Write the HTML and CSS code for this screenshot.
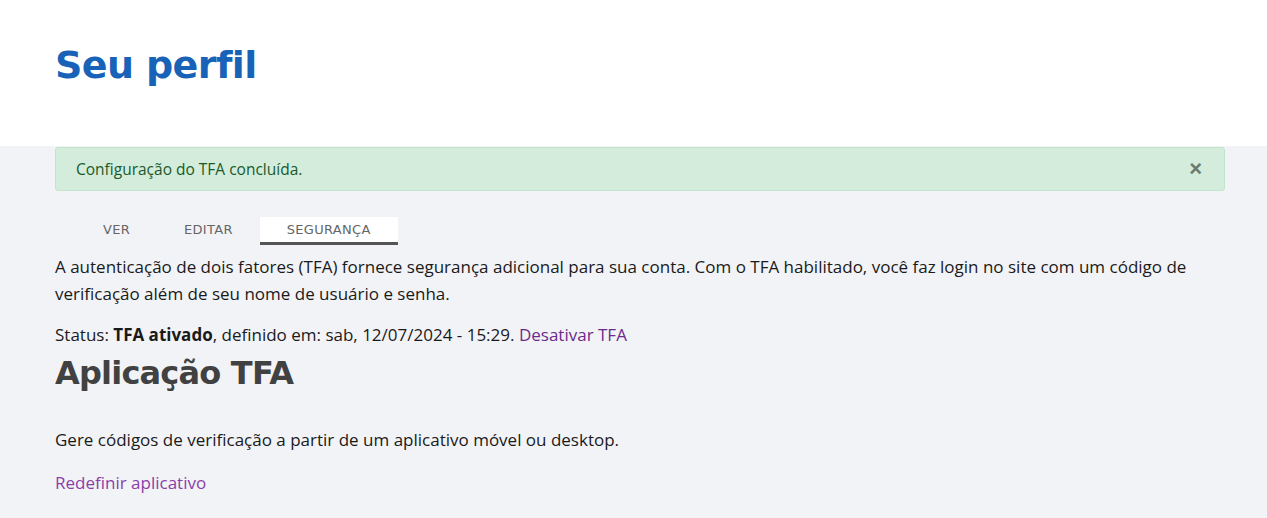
FILE: index.html
```html
<!DOCTYPE html>
<html lang="pt-BR">
<head>
    <meta charset="UTF-8" />
    <meta name="viewport" content="width=device-width, initial-scale=1.0" />
    <title>Seu perfil</title>
    <link rel="stylesheet" href="styles.css">
</head>
<body>
    <header class="page-header">
        <h1>Seu perfil</h1>
    </header>

    <main class="content">
        <div class="alert">
            <span>Configuração do TFA concluída.</span>
            <button class="alert-close" aria-label="Fechar">&times;</button>
        </div>

        <nav class="tabs">
            <a href="#" class="tab">Ver</a>
            <a href="#" class="tab">Editar</a>
            <a href="#" class="tab active">Segurança</a>
        </nav>

        <p class="intro">A autenticação de dois fatores (TFA) fornece segurança adicional para sua conta. Com o TFA habilitado, você faz login no site com um código de verificação além de seu nome de usuário e senha.</p>
        <p class="status">Status: <strong>TFA ativado</strong>, definido em: sab, 12/07/2024 - 15:29. <a href="#" class="link-dark">Desativar TFA</a></p>

        <h2>Aplicação TFA</h2>
        <p class="desc">Gere códigos de verificação a partir de um aplicativo móvel ou desktop.</p>
        <p><a href="#" class="link">Redefinir aplicativo</a></p>
    </main>
</body>
</html>
```

FILE: styles.css
```css
html, body { margin: 0; }
body { font-family: "Open Sans", "Noto Sans", sans-serif; font-size: 17px; color: #1a1a1a; background-color: #f2f3f7; min-height: 518px; }
.page-header { background: #fff; height: 146px; padding: 0 55px; box-sizing: border-box; }
.page-header h1 { margin: 0; padding-top: 43px; font-family: "DejaVu Sans", sans-serif; font-weight: bold; font-size: 38px; color: #1863b8; letter-spacing: -0.6px; }
.content { padding: 1px 42px 20px 55px; }
.alert { display: flex; justify-content: space-between; align-items: center; height: 44px; box-sizing: border-box; padding: 0 20px; background: #d4ecdb; border: 1px solid #c3e3cb; border-radius: 3px; color: #195a2a; font-size: 15.5px; }
.alert-close { background: none; border: 0; font-size: 22px; font-weight: bold; color: #6b7a6e; cursor: pointer; padding: 0 2px; line-height: 1; }
.tabs { display: flex; margin: 26px 0 0 21px; }
.tab { display: block; padding: 6px 27px 5px; font-family: "DejaVu Sans", sans-serif; font-size: 13px; line-height: 14px; letter-spacing: 0.3px; text-transform: uppercase; color: #666; text-decoration: none; border-bottom: 3px solid transparent; }
.tab.active { background: #fff; border-bottom-color: #555; }
.intro { margin: 8px 0 0; line-height: 27px; }
.status { margin: 14px 0 0; line-height: 27px; }
h2 { margin: 3px 0 0; font-family: "DejaVu Sans", sans-serif; font-size: 32px; font-weight: bold; color: #414141; line-height: 44px; letter-spacing: -0.8px; }
.desc { margin: 33px 0 0; }
.link, .link-dark { text-decoration: none; }
.link { color: #8a3ea8; }
.link-dark { color: #6b2b8c; }
p { margin: 20px 0 0; }
```
